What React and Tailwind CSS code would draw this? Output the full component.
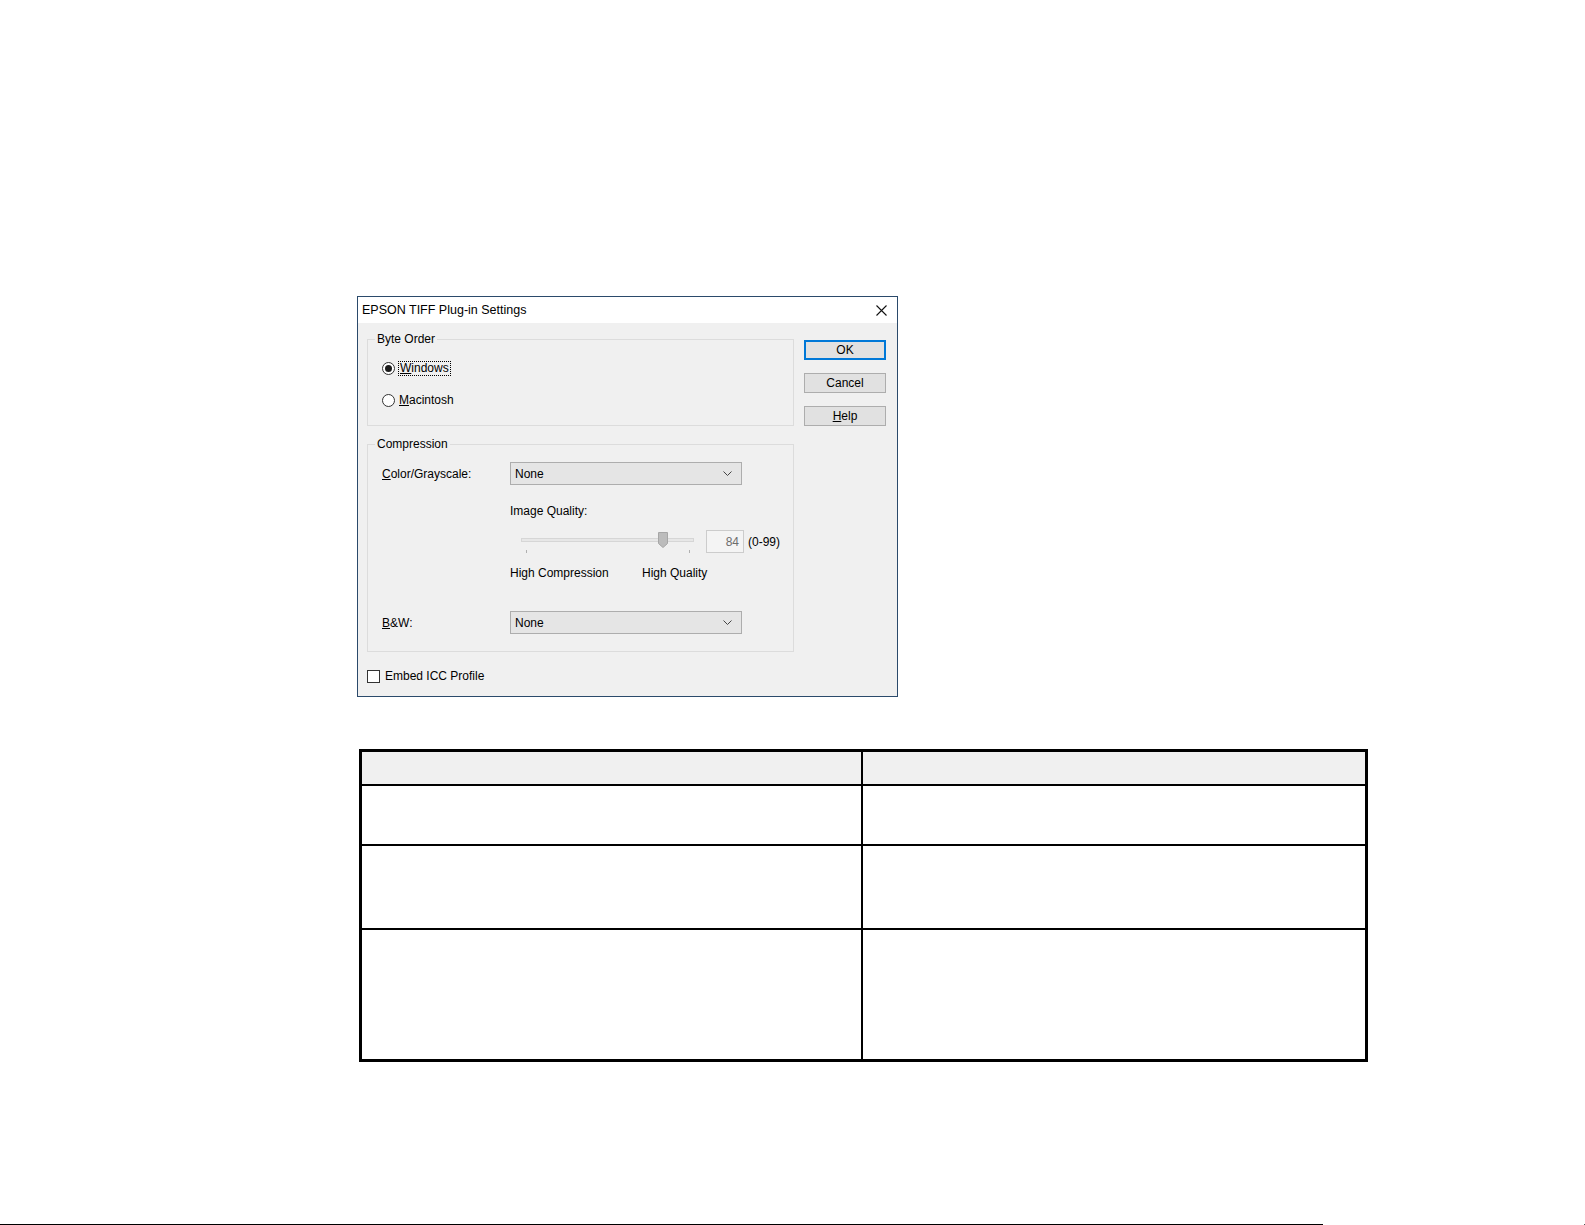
import React from "react";

function Radio({ checked }) {
  return (
    <span className="flex h-[13px] w-[13px] shrink-0 items-center justify-center rounded-full border border-[#333333] bg-white">
      {checked && <span className="h-[7px] w-[7px] rounded-full bg-[#1a1a1a]" />}
    </span>
  );
}

function Combo({ value }) {
  return (
    <div className="flex h-[23px] w-[232px] items-center justify-between border border-[#adadad] bg-[#e5e5e5] pl-[4px] pr-[9px]">
      <span>{value}</span>
      <svg width="9" height="5" viewBox="0 0 9 5">
        <path d="M0.5 0.5 L4.5 4.5 L8.5 0.5" fill="none" stroke="#444444" strokeWidth="1" />
      </svg>
    </div>
  );
}

function Button({ children, primary }) {
  return (
    <div
      className={
        primary
          ? "flex h-[20px] w-[82px] items-center justify-center border-2 border-[#0078d7] bg-[#e1e1e1]"
          : "flex h-[20px] w-[82px] items-center justify-center border border-[#adadad] bg-[#e1e1e1]"
      }
    >
      {children}
    </div>
  );
}

function QualitySlider() {
  return (
    <svg width="190" height="23" viewBox="0 0 190 23" className="shrink-0">
      <rect x="11.5" y="8.5" width="172" height="3" fill="#e7e7e7" stroke="#d6d6d6" />
      <path d="M148.5 2.5 H157.5 V13.5 L153 17.5 L148.5 13.5 Z" fill="#bcbcbc" stroke="#a6a6a6" />
      <line x1="16.5" y1="20" x2="16.5" y2="23" stroke="#b0b0b0" />
      <line x1="179.5" y1="20" x2="179.5" y2="23" stroke="#b0b0b0" />
    </svg>
  );
}

function SettingsDialog() {
  return (
    <div className="flex h-[401px] w-[541px] flex-col border border-[#2b4a6b] text-[12px] leading-[14px] text-black">
      {/* title bar */}
      <div className="flex h-[26px] items-center justify-between bg-white pl-[4px]">
        <span className="text-[12.5px]">EPSON TIFF Plug-in Settings</span>
        <div className="flex h-full w-[32px] items-center justify-center">
          <svg width="11" height="11" viewBox="0 0 11 11">
            <path d="M0.5 0.5 L10.5 10.5 M10.5 0.5 L0.5 10.5" stroke="#111111" strokeWidth="1.1" />
          </svg>
        </div>
      </div>

      {/* client area */}
      <div className="flex flex-1 bg-[#f0f0f0] pl-[9px] pt-[9px]">
        <div className="flex w-[427px] flex-col">
          <fieldset className="m-0 h-[94px] border border-[#dcdcdc] p-0">
            <legend className="ml-[7px] px-[2px] leading-[14px]">Byte Order</legend>
            <div className="flex flex-col gap-[16px] pl-[14px] pt-[14px]">
              <div className="flex h-[16px] items-center">
                <Radio checked />
                <span className="ml-[3px] border border-dotted border-black px-[1px] leading-[13px]">
                  <span className="underline">W</span>indows
                </span>
              </div>
              <div className="flex h-[16px] items-center">
                <Radio />
                <span className="ml-[4px]">
                  <span className="underline">M</span>acintosh
                </span>
              </div>
            </div>
          </fieldset>

          <fieldset className="m-0 mt-[11px] h-[215px] border border-[#dcdcdc] p-0">
            <legend className="ml-[7px] px-[2px] leading-[14px]">Compression</legend>
            <div className="flex flex-col pl-[14px] pt-[11px]">
              <div className="flex h-[23px] items-center">
                <span className="w-[128px]">
                  <span className="underline">C</span>olor/Grayscale:
                </span>
                <Combo value="None" />
              </div>

              <div className="mt-[19px] pl-[128px]">Image Quality:</div>

              <div className="mt-[12px] flex h-[23px] items-center pl-[128px]">
                <QualitySlider />
                <div className="ml-[6px] flex h-[23px] w-[38px] items-center justify-end border border-[#cccccc] bg-[#f4f4f4] pr-[4px] text-[#6d6d6d]">
                  84
                </div>
                <span className="ml-[4px]">(0-99)</span>
              </div>

              <div className="mt-[13px] flex pl-[128px]">
                <span className="w-[132px]">High Compression</span>
                <span>High Quality</span>
              </div>

              <div className="mt-[31px] flex h-[23px] items-center">
                <span className="w-[128px]">
                  <span className="underline">B</span>&amp;W:
                </span>
                <Combo value="None" />
              </div>
            </div>
          </fieldset>

          <div className="mt-[17px] flex h-[14px] items-center">
            <span className="h-[13px] w-[13px] border border-[#333333] bg-white" />
            <span className="ml-[5px]">Embed ICC Profile</span>
          </div>
        </div>

        <div className="ml-[10px] flex flex-col gap-[13px] pt-[8px]">
          <Button primary>OK</Button>
          <Button>Cancel</Button>
          <Button>
            <span>
              <span className="underline">H</span>elp
            </span>
          </Button>
        </div>
      </div>
    </div>
  );
}

function SettingsTable() {
  const rows = [58, 82, 129];
  return (
    <div className="w-[1009px] border-[3px] border-black">
      <div className="grid h-[32px] grid-cols-[501px_1fr] bg-[#f0f0f0]">
        <div className="border-r-2 border-black" />
        <div />
      </div>
      {rows.map((h, i) => (
        <div
          key={i}
          className="grid grid-cols-[501px_1fr] border-t-2 border-black"
          style={{ height: h + 2 }}
        >
          <div className="border-r-2 border-black" />
          <div />
        </div>
      ))}
    </div>
  );
}

export default function App() {
  return (
    <div className="flex h-[1225px] w-[1585px] flex-col overflow-hidden bg-white font-['Liberation_Sans',Arial,sans-serif]">
      <div className="ml-[357px] mt-[296px]">
        <SettingsDialog />
      </div>
      <div className="ml-[359px] mt-[52px]">
        <SettingsTable />
      </div>
      <div className="mt-auto flex items-end justify-between">
        <div className="h-px w-[1323px] bg-black" />
        <div className="h-px w-px bg-[#555555]" />
      </div>
    </div>
  );
}
